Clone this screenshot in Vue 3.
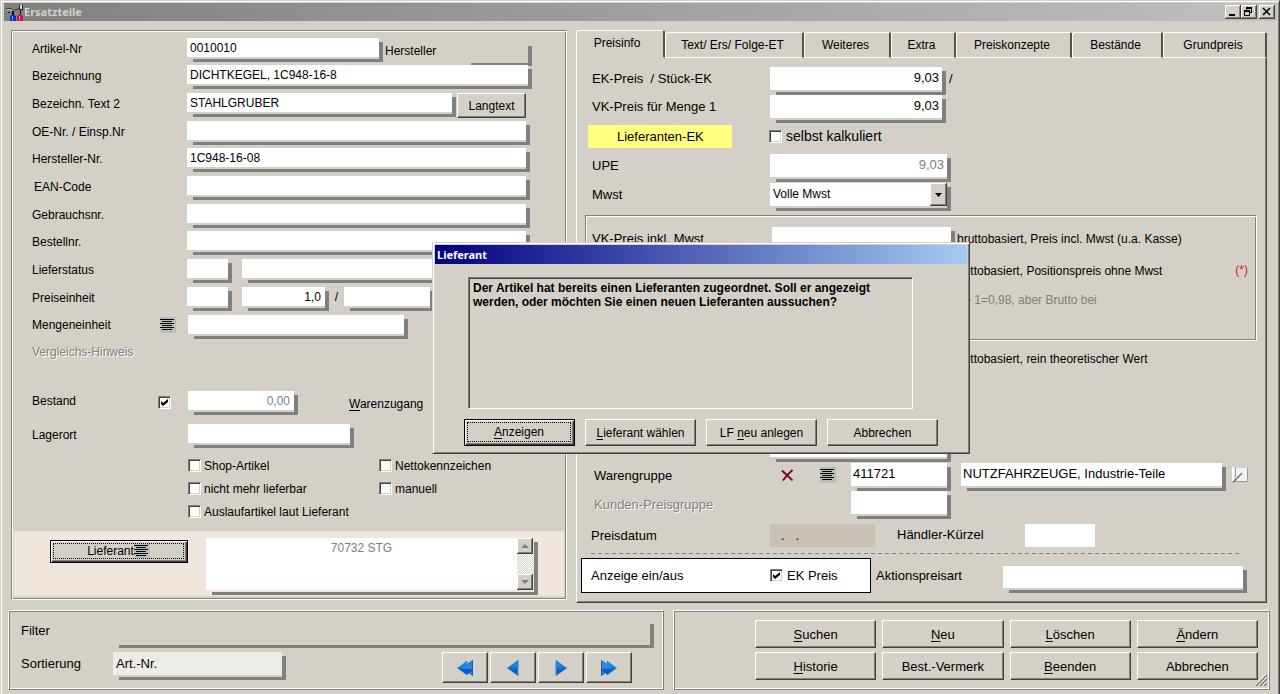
<script setup>
import { ref } from 'vue'

const tabs = ['Preisinfo', 'Text/ Ers/ Folge-ET', 'Weiteres', 'Extra', 'Preiskonzepte', 'Bestände', 'Grundpreis']
const activeTab = ref('Preisinfo')
const supplier = ref('70732 STG')

const plainRows = [
  { id: 'oenr', label: 'OE-Nr. / Einsp.Nr', value: '' },
  { id: 'hnr', label: 'Hersteller-Nr.', value: '1C948-16-08' },
  { id: 'ean', label: 'EAN-Code', value: '', indent: true },
  { id: 'gebr', label: 'Gebrauchsnr.', value: '' },
  { id: 'best', label: 'Bestellnr.', value: '' },
]

const actions = [
  ['', 'S', 'uchen'],
  ['', 'N', 'eu'],
  ['', 'L', 'öschen'],
  ['', 'Ä', 'ndern'],
  ['', 'H', 'istorie'],
  ['Best.-Vermerk', '', ''],
  ['', 'B', 'eenden'],
  ['Abbrechen', '', ''],
]

const dialogActions = [
  ['', 'A', 'nzeigen'],
  ['', 'L', 'ieferant wählen'],
  ['LF ', 'n', 'eu anlegen'],
  ['Abbrechen', '', ''],
]

const navs = [
  { label: 'Erster', double: true, left: true },
  { label: 'Zurück', double: false, left: true },
  { label: 'Weiter', double: false, left: false },
  { label: 'Letzter', double: true, left: false },
]
</script>

<template>
  <div class="window">
    <header class="titlebar">
      <svg class="app-icon" width="18" height="17" viewBox="0 0 18 17" aria-hidden="true">
        <path d="M0 4.500h5l3 2 5-2" stroke="#333" fill="none" />
        <path d="M1 5.500h4l3 2" stroke="#c8c8c8" fill="none" />
        <path d="M13 1h1v4h2V1h1v5h-4z" fill="#222" />
        <path d="M14 1h2v4h-2z" fill="#ddd" />
        <path d="M2 8h2v1H2zM6 7h2v4H6zM14 6h1v5h-1z" fill="#111" />
        <path d="M5 11h4v1h1v5H4v-5h1z" fill="#0a2ce0" />
        <path d="M6 12h1v4H6z" fill="#7fb0ff" />
        <path d="M12 11h4v1h1v5h-6v-5h1z" fill="#d8123c" />
        <path d="M13 12h1v4h-1z" fill="#ff90a8" />
      </svg>
      <h1>Ersatzteile</h1>
      <div class="winbtns">
        <button type="button" aria-label="Minimieren"><svg width="11" height="10" viewBox="0 0 11 10"><path d="M2 8h6v2H2z" /></svg></button>
        <button type="button" aria-label="Wiederherstellen"><svg width="11" height="10" viewBox="0 0 11 10"><path d="M3 1h6v6H7V6h1V3H4v1H3zM1 4h6v6H1zM2 6v3h4V6z" fill-rule="evenodd" /></svg></button>
        <button type="button" aria-label="Schließen" class="close"><svg width="11" height="10" viewBox="0 0 11 10"><path d="M2 2l7 7M9 2L2 9" stroke="#000" stroke-width="1.600" /></svg></button>
      </div>
    </header>

    <main class="main">
      <section class="article">
        <div class="rows">
          <div class="row">
            <label for="artnr">Artikel-Nr</label>
            <span class="field w-art"><input id="artnr" value="0010010" /></span>
            <label class="maker" for="maker">Hersteller</label>
            <span class="field ghost w-maker"><input id="maker" /></span>
          </div>
          <div class="row">
            <label for="bez">Bezeichnung</label>
            <span class="field grow wide"><input id="bez" value="DICHTKEGEL, 1C948-16-8" /></span>
          </div>
          <div class="row">
            <label for="bez2">Bezeichn. Text 2</label>
            <span class="field grow"><input id="bez2" value="STAHLGRUBER" /></span>
            <button type="button" class="btn lang">Langtext</button>
          </div>
          <div v-for="r in plainRows" :key="r.id" class="row">
            <label :for="r.id" :class="{ indent: r.indent }">{{ r.label }}</label>
            <span class="field grow"><input :id="r.id" :value="r.value" /></span>
          </div>
          <div class="row">
            <label for="lstat">Lieferstatus</label>
            <span class="field w-code"><input id="lstat" /></span>
            <span class="field grow after-code"><input aria-label="Lieferstatus Text" /></span>
          </div>
          <div class="row">
            <label for="pe">Preiseinheit</label>
            <span class="field w-code"><input id="pe" /></span>
            <span class="field w-unit after-code"><input class="num" aria-label="Preiseinheit Menge" value="1,0" /></span>
            <span class="slash">/</span>
            <span class="field w-unit2"><input aria-label="Preiseinheit Bezug" /></span>
          </div>
        </div>

        <div class="rows lower">
          <div class="row r-unit">
            <label for="me">Mengeneinheit</label>
            <button type="button" class="lines" aria-label="Mengeneinheit wählen">
              <svg width="16" height="16" viewBox="0 0 16 16"><path d="M0 0h16v16H0z" fill="#bcbcb8" /><path d="M0 2.500h14M2 4.500h10M0 6.500h14M2 8.500h10M0 10.500h14M2 12.500h10" stroke="#000" /></svg>
            </button>
            <span class="field w-me"><input id="me" /></span>
          </div>
          <div class="row r-hint"><span class="disabled">Vergleichs-Hinweis</span></div>
          <div class="row r-stock">
            <label for="bst">Bestand</label>
            <input class="check stock-check" type="checkbox" checked aria-label="Bestand führen" />
            <span class="field w-stock"><input id="bst" class="num dim" value="0,00" /></span>
            <a class="inbound" href="#"><u>W</u>arenzugang</a>
          </div>
          <div class="row r-place">
            <label for="lag">Lagerort</label>
            <span class="field w-place"><input id="lag" /></span>
          </div>
          <div class="checks">
            <label><input class="check" type="checkbox" />Shop-Artikel</label>
            <label><input class="check" type="checkbox" />Nettokennzeichen</label>
            <label><input class="check" type="checkbox" />nicht mehr lieferbar</label>
            <label><input class="check" type="checkbox" />manuell</label>
            <label class="span2"><input class="check" type="checkbox" />Auslaufartikel laut Lieferant</label>
          </div>
        </div>

        <div class="supplier">
          <button type="button" class="btn default sup-btn">
            <span class="focus">Lieferant<svg width="16" height="14" viewBox="0 0 16 14"><path d="M0 0h16v14H0z" fill="#bcbcb8" /><path d="M0 1.500h14M2 3.500h10M0 5.500h14M2 7.500h10M0 9.500h14M2 11.500h10" stroke="#000" /></svg></span>
          </button>
          <span class="field area">
            <textarea v-model="supplier" aria-label="Lieferant" class="dim"></textarea>
            <span class="scroll">
              <button type="button" aria-label="Nach oben"><svg width="8" height="5" viewBox="0 0 8 5"><path d="M0 4l4-4 4 4z" fill="#808080" /></svg></button>
              <i></i>
              <button type="button" aria-label="Nach unten"><svg width="8" height="5" viewBox="0 0 8 5"><path d="M0 0h8L4 4z" fill="#808080" /></svg></button>
            </span>
          </span>
        </div>
      </section>

      <section class="prices">
        <div class="tabs" role="tablist">
          <button
            v-for="t in tabs"
            :key="t"
            type="button"
            role="tab"
            :aria-selected="t === activeTab"
            :class="{ active: t === activeTab }"
            @click="activeTab = t"
          >{{ t }}</button>
        </div>
        <div class="body">
          <div class="prow p-first">
            <label for="ek">EK-Preis&nbsp; / Stück-EK</label>
            <span class="field w-price"><input id="ek" class="num" value="9,03" /></span>
            <span class="per">/</span>
          </div>
          <div class="prow p-sell">
            <label for="vk">VK-Preis für Menge 1</label>
            <span class="field w-price"><input id="vk" class="num" value="9,03" /></span>
          </div>
          <div class="prow p-sup">
            <span class="yellow">Lieferanten-EK</span>
            <label class="self"><input class="check" type="checkbox" />selbst kalkuliert</label>
          </div>
          <div class="prow p-upe">
            <label for="upe">UPE</label>
            <span class="field w-upe"><input id="upe" class="num dim" value="9,03" /></span>
          </div>
          <div class="prow p-tax">
            <label for="mwst">Mwst</label>
            <span class="field w-upe">
              <select id="mwst"><option>Volle Mwst</option></select>
              <span class="drop"><svg width="7" height="4" viewBox="0 0 7 4"><path d="M0 0h7L3.500 4z" /></svg></span>
            </span>
          </div>

          <div class="group">
            <div class="grow-row">
              <label for="vki">VK-Preis inkl. Mwst</label>
              <span class="field w-group"><input id="vki" /></span>
              <span class="note">bruttobasiert, Preis incl. Mwst (u.a. Kasse)</span>
            </div>
            <div class="grow-row second">
              <span class="note offset">nettobasiert, Positionspreis ohne Mwst</span>
              <span class="star">(*)</span>
            </div>
            <div class="grow-row third"><span class="note dim offset">- 1=0,98, aber Brutto bei</span></div>
          </div>

          <div class="theory"><span class="note">nettobasiert, rein theoretischer Wert</span></div>

          <div class="prow p-hidden"><span class="field w-upe"><input aria-label="Kalkulation" /></span></div>

          <div class="prow p-group">
            <label for="wg">Warengruppe</label>
            <button type="button" class="ico" aria-label="Warengruppe löschen"><svg width="13" height="13" viewBox="0 0 13 13"><path d="M1 1.500c3 3 7 6 10.500 10M11.500 1C8 4 4.500 7.500 2 11.500" fill="none" stroke="#780010" stroke-width="1.800" /></svg></button>
            <button type="button" class="ico" aria-label="Warengruppe wählen"><svg width="16" height="16" viewBox="0 0 16 16"><path d="M0 0h16v16H0z" fill="#bcbcb8" /><path d="M0 2.500h14M2 4.500h10M0 6.500h14M2 8.500h10M0 10.500h14M2 12.500h10" stroke="#000" /></svg></button>
            <span class="field w-wg"><input id="wg" value="411721" /></span>
            <span class="field w-wgtext"><input aria-label="Warengruppe Text" value="NUTZFAHRZEUGE, Industrie-Teile" /></span>
            <button type="button" class="ico" aria-label="Bearbeiten"><svg width="16" height="16" viewBox="0 0 16 16"><path d="M1 1h14v13H4z" fill="#f2f2f2" /><path d="M1 0v14" stroke="#fff" stroke-width="2" /><path d="M3.500 1v9M3 14.500h12.500V1" stroke="#999" fill="none" /><path d="M1 15.500L10 6" stroke="#777" stroke-width="1.500" /></svg></button>
          </div>
          <div class="prow p-cust">
            <span class="disabled">Kunden-Preisgruppe</span>
            <span class="field w-wg"><input aria-label="Kunden-Preisgruppe" /></span>
          </div>
          <div class="prow p-date">
            <label for="pd">Preisdatum</label>
            <input id="pd" class="flat date" value=".&nbsp;&nbsp; ." />
            <label class="dealer" for="hk">Händler-Kürzel</label>
            <input id="hk" class="flat code" />
          </div>
          <hr class="dash" />
          <div class="p-show">
            <div class="showbox">
              <span>Anzeige ein/aus</span>
              <label><input class="check" type="checkbox" checked />EK Preis</label>
            </div>
            <label class="promo" for="ap">Aktionspreisart</label>
            <span class="field grow"><input id="ap" /></span>
          </div>
        </div>
      </section>
    </main>

    <footer class="bottom">
      <section class="ridge sort">
        <div class="filter">
          <label for="flt">Filter</label>
          <span class="field ghost grow"><input id="flt" /></span>
        </div>
        <div class="sorting">
          <label for="srt">Sortierung</label>
          <span class="field w-sort"><input id="srt" value="Art.-Nr." /></span>
          <div class="navs">
            <button v-for="n in navs" :key="n.label" type="button" class="btn" :aria-label="n.label">
              <svg width="18" height="18" viewBox="0 0 18 18" :class="{ flip: !n.left }">
                <template v-if="n.double">
                  <path d="M7 9l9.500-7.500v15z" fill="#2090dc" stroke="#1060b0" />
                  <path d="M1.500 9L11 2v14z" fill="#1b88dc" stroke="#2f9be0" />
                  <path d="M2 9h14v3l-5 3.500z" fill="#0c5cc0" />
                  <path d="M5 8.500L10 5v4h6v1H6z" fill="#1a84d8" />
                </template>
                <template v-else>
                  <path d="M3.500 9L14 1.500v15z" fill="#1b88dc" stroke="#2f86c8" />
                  <path d="M4 9h9v6.500z" fill="#0c5cc0" />
                  <path d="M6 9l5-3v5z" fill="#1478d4" />
                </template>
              </svg>
            </button>
          </div>
        </div>
      </section>
      <section class="ridge commands">
        <button v-for="a in actions" :key="a.join('')" type="button" class="btn">{{ a[0] }}<u v-if="a[1]">{{ a[1] }}</u>{{ a[2] }}</button>
        <svg class="grip" width="12" height="12" viewBox="0 0 12 12" aria-hidden="true">
          <path d="M0 11L11 0M4 11l7-7M8 11l3-3" stroke="#fff" />
          <path d="M1 12L12 1M5 12l7-7M9 12l3-3" stroke="#808080" stroke-width="1.500" />
        </svg>
      </section>
    </footer>

    <div class="dialog" role="dialog" aria-labelledby="dlg-title">
      <h2 id="dlg-title">Lieferant</h2>
      <p>Der Artikel hat bereits einen Lieferanten zugeordnet. Soll er angezeigt werden, oder möchten Sie einen neuen Lieferanten aussuchen?</p>
      <div class="dlg-btns">
        <button v-for="(a, i) in dialogActions" :key="i" type="button" class="btn" :class="{ default: i === 0 }">
          <span :class="{ focus: i === 0 }">{{ a[0] }}<u v-if="a[1]">{{ a[1] }}</u>{{ a[2] }}</span>
        </button>
      </div>
    </div>
  </div>
</template>

<style>
body { background: #d4d0c8; }
</style>

<style scoped>
* { box-sizing: border-box; }
.window {
  position: relative;
  min-height: 100vh;
  padding: 2px 2px 4px 3px;
  background: #d4d0c8;
  border: 1px solid #d4d0c8;
  border-right-color: #404040;
  border-bottom: 0;
  box-shadow: inset 1px 1px #fff, inset -1px 0 #808080;
  color: #000;
  font: 12px "Liberation Sans", Arial, sans-serif;
  overflow: hidden;
}
button, input, select, textarea { font: inherit; color: inherit; margin: 0; padding: 0; border: 0; border-radius: 0; outline: 0; background: none; }
button { white-space: nowrap; }
label, span, a { white-space: nowrap; }
.titlebar { display: flex; align-items: center; height: 18px; padding: 0 2px; background: linear-gradient(90deg, #808080, #c0c0c0); }
.titlebar h1 { flex: 1; margin: 0; font: bold 11px/16px "Noto Sans", sans-serif; color: #d4d0c8; }
.app-icon { flex: none; }
.winbtns { display: flex; }
.winbtns button { display: flex; width: 16px; height: 14px; padding: 1px 2px; background: #d4d0c8; box-shadow: inset -1px -1px #404040, inset 1px 1px #fff, inset -2px -2px #808080; }
.winbtns .close { margin-left: 2px; }

.main { display: grid; grid-template-columns: 556fr 691fr; gap: 9px; align-items: start; padding: 9px 10px 0 7px; }
.article { border: 1px solid #808080; border-right-color: #fff; border-bottom-color: #fff; box-shadow: inset 1px 1px #fff, inset -1px -1px #808080; padding: 7px 2px 3px; }
.rows { padding: 0 34px 0 18px; }
.row { display: flex; align-items: flex-start; height: 28px; }
.rows:first-child .row:nth-child(3n+1) { height: 27px; }
.row > label:first-child { flex: none; width: 155px; line-height: 23px; }
.row > label.indent { padding-left: 2px; }

/* White box with a detached drop shadow below and to the right */
.field {
  display: flex;
  flex: none;
  padding: 0 4px 5px 0;
  background:
    linear-gradient(#808080, #808080) 100% 4px / 4px 100% no-repeat,
    linear-gradient(#808080, #808080) 6px 100% / 100% 3px no-repeat;
}
.field input { flex: 1; width: 100%; min-width: 0; height: 19px; padding: 0 4px 0 3px; background: #fff; }
.field.ghost input { background: transparent; }
.field.grow { flex: 1; }
.num { text-align: right; }
.field .dim, .dim { color: #808080; }
.wide { margin-right: -2px; }
.w-art { width: 196px; }
.maker { width: 82px; padding-left: 2px; line-height: 27px; }
.w-maker { flex: 1; margin: 4px -2px 0 0; padding-bottom: 5px; }
.lang { width: 69px; height: 25px; margin: 0 4px 0 1px; }
.w-code { width: 45px; }
.after-code { margin-left: 10px; }
.w-unit { width: 87px; }
.slash { width: 15px; text-align: center; line-height: 21px; }
.w-unit2 { width: 90px; }
.disabled { color: #808080; text-shadow: 1px 1px #fff; }

.lower { padding-top: 1px; }
.row.r-unit { height: 27px; }
.r-unit > label:first-child { width: 128px; line-height: 21px; }
.lines { display: flex; margin: 2px 12px 0 0; }
.w-me { width: 220px; }
.row.r-hint { height: 49px; line-height: 21px; }
.row.r-stock { height: 33px; }
.r-stock > label:first-child { width: 126px; line-height: 21px; }
.stock-check { margin: 5px 17px 0 0; }
.w-stock { width: 110px; }
.inbound { margin-left: 51px; line-height: 27px; color: #000; text-decoration: none; }
.row.r-place { height: 30px; }
.row.r-place > label:first-child { width: 156px; }
.w-place { width: 166px; }
.checks { display: grid; grid-template-columns: 191px auto; grid-auto-rows: 23px; padding: 0 0 8px 156px; }
.checks label { display: flex; align-items: center; gap: 3px; }
.span2 { grid-column: span 2; }

.check {
  appearance: none;
  flex: none;
  width: 13px;
  height: 13px;
  padding: 3px;
  background: #fff;
  border: 1px solid #808080;
  border-right-color: #fff;
  border-bottom-color: #fff;
  box-shadow: inset 1px 1px #404040, inset -1px -1px #d4d0c8;
}
.check:checked { padding: 2px; }
.check:checked::before {
  content: "";
  display: block;
  width: 7px;
  height: 7px;
  background: #000;
  clip-path: polygon(0 29%, 29% 57%, 100% 0, 100% 43%, 29% 100%, 0 71%);
}

.btn {
  display: flex;
  align-items: center;
  justify-content: center;
  background: #d4d0c8;
  border: 1px solid #fff;
  border-right-color: #404040;
  border-bottom-color: #404040;
  box-shadow: inset -1px -1px #808080;
}
u { text-underline-offset: 2px; }
.btn.default { padding: 2px 3px 3px 2px; border-color: #000; box-shadow: inset 1px 1px #fff, inset -1px -1px #404040, inset -2px -2px #808080; }
.btn .focus { display: flex; flex: 1; align-self: stretch; align-items: center; justify-content: center; border: 1px dotted #000; }

.supplier { display: flex; align-items: flex-start; padding: 7px 26px 1px 36px; background: #f0e6dc; }
.sup-btn { width: 138px; height: 23px; margin: 2px 18px 0 0; }
.area { flex: 1; padding: 0 5px 5px 0; }
.area textarea { flex: 1; width: 0; height: 52px; padding-top: 2px; text-align: center; resize: none; overflow: hidden; background: #fff; line-height: 16px; }
.scroll { display: flex; flex-direction: column; width: 16px; background: repeating-conic-gradient(#fff 0 25%, #d4d0c8 0 50%) 0 0 / 2px 2px; }
.scroll i { flex: 1; }
.scroll button, .drop { display: flex; align-items: center; justify-content: center; width: 16px; height: 16px; background: #d4d0c8; box-shadow: inset -1px -1px #404040, inset 1px 1px #fff, inset -2px -2px #808080; }

.prices { font-size: 13px; }
.tabs { display: grid; grid-template-columns: 89fr 139fr 87fr 65fr 116fr 91fr 104fr; align-items: end; font-size: 12px; }
.tabs button {
  height: 26px;
  padding-right: 3px;
  border: 1px solid #fff;
  border-right: 2px solid #505050;
  border-radius: 3px 2px 0 0;
}
.tabs button.active { height: 28px; border-bottom-color: transparent; padding: 0 6px 3px 0; }
.body { border-left: 1px solid #fff; border-right: 1px solid #404040; border-bottom: 1px solid #404040; box-shadow: inset -1px -1px #808080; padding: 9px 0 9px; }
.body .field input { height: 23px; padding: 0 3px 2px 2px; }
.prow { display: flex; align-items: flex-start; padding-left: 15px; line-height: 23px; }
.prow > label:first-child { flex: none; width: 178px; }
.p-first { height: 28px; }
.p-sell { height: 30px; }
.p-sup { height: 29px; padding-left: 11px; }
.p-upe { height: 29px; }
.p-tax { height: 32px; }
.w-price { width: 176px; }
.per { padding-left: 3px; }
.yellow { width: 181px; padding-left: 29px; background: linear-gradient(#ffff80, #ffff80) 0 0 / 144px 100% no-repeat; }
.self { display: flex; align-items: center; gap: 4px; font-size: 14px; }
.w-upe { width: 181px; }
.field select { flex: 1; width: 0; height: 23px; padding-left: 3px; background: #fff; appearance: none; font-size: 12px; }
.drop { width: 17px; height: 23px; }

.group { margin: 0 9px 0 8px; height: 126px; padding: 11px 6px 0; border: 1px solid #808080; border-right-color: #fff; border-bottom-color: #fff; box-shadow: inset 1px 1px #fff, inset -1px -1px #808080; }
.grow-row { display: flex; height: 32px; line-height: 24px; }
.grow-row > label { flex: none; width: 180px; }
.w-group { width: 183px; height: 28px; }
.note { padding-left: 2px; font-size: 12px; }
.offset { margin-left: 363px; }
.second { height: 29px; }
.star { margin: 0 2px 0 auto; color: #e01010; font-size: 12px; line-height: 22px; }
.third .offset { padding-left: 12px; }
.theory { height: 93px; padding: 6px 0 0 378px; line-height: 24px; }
.p-hidden { height: 29px; padding-left: 193px; }
.p-group { height: 28px; padding-left: 17px; }
.p-group > label:first-child { width: 187px; line-height: 25px; }
.ico { display: flex; margin: 4px 15px 0 0; }
.p-group .ico:nth-child(2) { margin: 6px 26px 0 0; }
.p-group .ico:last-child { margin: 4px 0 0 6px; }
.w-wg { width: 100px; }
.w-wgtext { width: 265px; margin-left: 10px; }
.p-cust { height: 33px; padding-left: 17px; line-height: 27px; }
.p-cust .disabled { width: 257px; }
.p-date { height: 29px; padding-left: 14px; line-height: 24px; }
.p-date > label:first-child { width: 179px; }
.flat { height: 23px; background: #fff; }
.date { width: 105px; padding-left: 11px; background: #c9c0b6; }
.dealer { width: 150px; padding-left: 22px; line-height: 21px; }
.code { width: 70px; }
.dash { height: 1px; margin: 0 26px 4px 14px; border: 0; background: repeating-linear-gradient(90deg, #808080 0 4px, transparent 4px 7px); }
.p-show { display: flex; align-items: center; padding: 0 19px 0 4px; }
.showbox { display: flex; align-items: center; width: 290px; height: 35px; padding-left: 9px; background: #fff; border: 1px solid #000; }
.showbox > span { width: 179px; }
.showbox label { display: flex; align-items: center; gap: 4px; }
.promo { width: 132px; padding-left: 5px; }
.p-show .field { margin-top: 8px; }
.p-show .field input { height: 22px; }

.bottom { display: grid; grid-template-columns: 656fr 597fr; gap: 9px; padding: 7px 7px 0 4px; font-size: 13px; }
.ridge { height: 80px; border: 1px solid #fff; border-right-color: #808080; border-bottom-color: #808080; box-shadow: inset 1px 1px #808080, inset -1px -1px #fff; }
.filter { display: flex; height: 41px; padding: 8px 9px 0 12px; line-height: 23px; }
.filter label, .sorting label { flex: none; width: 92px; }
.filter .field { height: 28px; margin-top: 1px; }
.sorting { display: flex; padding-left: 12px; line-height: 23px; }
.w-sort { width: 173px; height: 28px; }
.w-sort input { height: 23px; background: #ecebe6; }
.navs { display: flex; gap: 2px; margin: 0 31px 0 auto; }
.navs .btn { width: 46px; height: 31px; }
.flip { transform: scaleX(-1); }
.commands { position: relative; display: grid; grid-template-columns: repeat(4, 1fr); grid-auto-rows: 28px; gap: 4px 6px; padding: 9px 11px 0 81px; }
.grip { position: absolute; right: 2px; bottom: 3px; }

.dialog {
  position: absolute;
  left: calc(50% - 208px);
  top: 241px;
  width: 538px;
  padding: 2px 2px 7px;
  background: #d4d0c8;
  border: 1px solid #d4d0c8;
  border-right-color: #404040;
  border-bottom-color: #404040;
  box-shadow: inset 1px 1px #fff, inset -1px -1px #808080;
}
.dialog h2 { margin: 0; height: 19px; padding-left: 2px; font: bold 11px/19px "Noto Sans", sans-serif; color: #fff; background: linear-gradient(90deg, #000080, #a6caf0); }
.dialog p { height: 132px; margin: 13px 54px 10px 33px; padding: 3px 24px 3px 4px; font-weight: bold; font-size: 12px; line-height: 14px; border: 1px solid #808080; border-right-color: #fff; border-bottom-color: #fff; box-shadow: inset 1px 1px #404040; }
.dlg-btns { display: grid; grid-template-columns: repeat(4, 1fr); gap: 10px; padding: 0 29px; }
.dlg-btns .btn { height: 27px; }
</style>
